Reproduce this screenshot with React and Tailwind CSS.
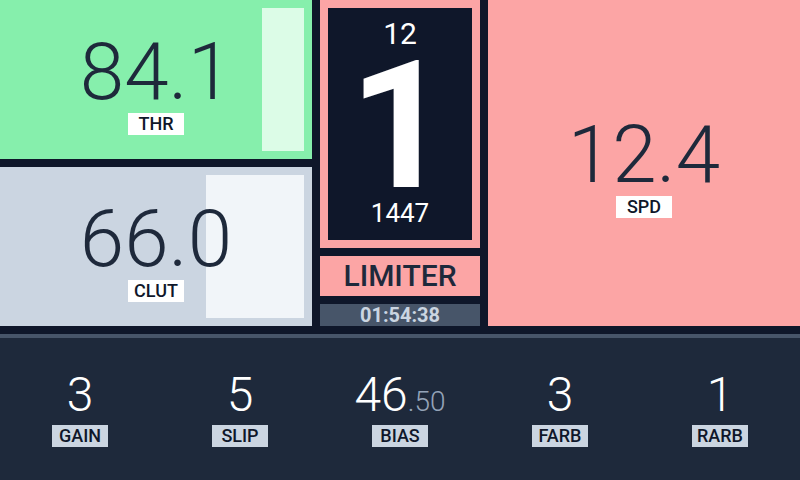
import React from "react";

const FONT = { fontFamily: "Roboto, 'Noto Sans', sans-serif" };

const BOTTOM = [
  { label: "GAIN", value: "3" },
  { label: "SLIP", value: "5" },
  { label: "BIAS", value: "46", frac: ".50" },
  { label: "FARB", value: "3" },
  { label: "RARB", value: "1" },
];

function Gauge({ value, label, bg, fill, fillWidth, className = "" }) {
  return (
    <div className={`relative flex flex-col items-center justify-center pt-2 ${bg} ${className}`}>
      {fillWidth > 0 && <div className={`absolute top-2 right-2 bottom-2 ${fill}`} style={{ width: fillWidth }} />}
      <div className="relative text-[80px] leading-[78px] font-light text-[#1e293b]">{value}</div>
      <div className="relative mt-[2px] w-14 h-[22px] bg-white flex items-center justify-center text-[18px] leading-none font-medium text-[#0f172a]">
        {label}
      </div>
    </div>
  );
}

export default function App() {
  return (
    <div className="w-[800px] h-[480px] bg-[#0f172a] flex flex-col overflow-hidden" style={FONT}>
      {/* top area */}
      <div className="h-[334px] pb-2 flex gap-2">
        <div className="w-[312px] flex flex-col gap-2">
          <Gauge value="84.1" label="THR" bg="bg-[#86efac]" fill="bg-[#dcfce7]" fillWidth={42} className="h-[159px]" />
          <Gauge value="66.0" label="CLUT" bg="bg-[#cbd5e1]" fill="bg-[#f1f5f9]" fillWidth={98} className="h-[159px]" />
        </div>

        <div className="w-[160px] flex flex-col gap-2">
          <div className="h-[248px] bg-[#fca5a5] p-2">
            <div className="h-full bg-[#0f172a] flex flex-col items-center pt-[11px] text-white">
              <div className="text-[30px] leading-[30px]">12</div>
              <div className="text-[178px] leading-[140px] font-bold mt-[7px]">1</div>
              <div className="text-[26px] leading-[26px] mt-[4px]">1447</div>
            </div>
          </div>
          <div className="h-10 bg-[#fca5a5] flex items-center justify-center text-[30px] leading-none font-medium text-[#1e293b]">
            LIMITER
          </div>
          <div className="h-[22px] bg-[#475569] flex items-center justify-center text-[20px] leading-[22px] font-bold text-[#cbd5e1]">
            01:54:38
          </div>
        </div>

        <Gauge value="12.4" label="SPD" bg="bg-[#fca5a5]" fillWidth={0} className="flex-1" />
      </div>

      {/* bottom bar */}
      <div className="flex-1 bg-[#1e293b] border-t-4 border-[#475569] grid grid-cols-5 items-center pb-[6px]">
        {BOTTOM.map((b) => (
          <div key={b.label} className="flex flex-col items-center">
            <div className="h-[60px] text-[48px] leading-[60px] font-light text-white">
              {b.value}
              {b.frac && <span className="text-[28px] leading-none text-[#94a3b8]">{b.frac}</span>}
            </div>
            <div className="w-14 h-[22px] bg-[#cbd5e1] flex items-center justify-center text-[18px] leading-none font-medium text-[#0f172a]">
              {b.label}
            </div>
          </div>
        ))}
      </div>
    </div>
  );
}
